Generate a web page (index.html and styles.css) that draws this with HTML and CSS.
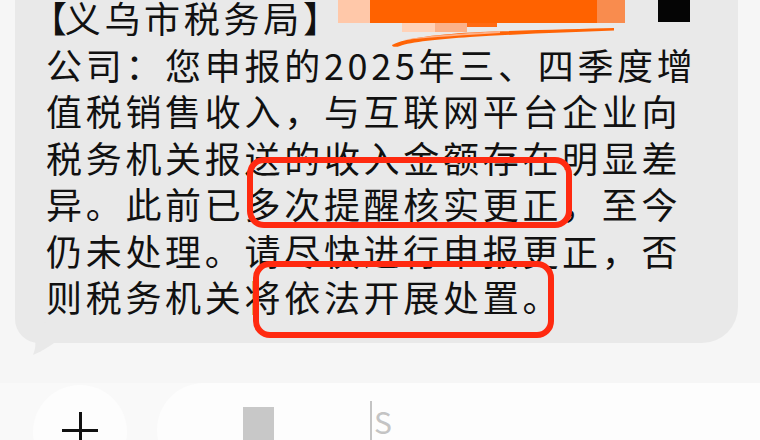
FILE: index.html
```html
<!DOCTYPE html>
<html lang="zh-CN">
<head>
<meta charset="utf-8">
<title>短信</title>
<link rel="stylesheet" href="styles.css">
</head>
<body>
<div class="page">
  <div class="thread">
    <div class="bubble">
      <div class="line"><span class="lb">【</span>义乌市税务局】</div>
      <div class="line">公司：您申报的2025年三、四季度增</div>
      <div class="line">值税销售收入，与互联网平台企业向</div>
      <div class="line">税务机关报送的收入金额存在明显差</div>
      <div class="line">异。此前已多次提醒核实更正，至今</div>
      <div class="line">仍未处理。请尽快进行申报更正，否</div>
      <div class="line">则税务机关将依法开展处置。</div>
      <svg class="tail" width="60" height="50" viewBox="0 0 60 50">
        <path d="M13 17 C20 25 23 34 18 46 C28 42 36 36 45 30 L45 10 Z" fill="#e9e9e9"/>
      </svg>
    </div>
  </div>
  <div class="toolbar">
    <div class="plus-btn"><span class="plus"></span></div>
    <div class="input-pill">
      <span class="ghost-square"></span>
      <span class="ghost-glyph">S</span>
    </div>
  </div>

  <div class="redact r-peach"></div>
  <div class="redact r-orange"></div>
  <div class="redact r-lightorange"></div>
  <div class="redact r-peach2"></div>
  <div class="redact r-mid"></div>
  <div class="redact r-orange2"></div>
  <div class="redact r-black"></div>
  <svg class="swoosh" width="760" height="60" viewBox="0 0 760 60">
    <path d="M392 45 C405 38 440 34 480 32 C530 30 580 29 614 28 L614 30.5 C570 32 520 34 470 37 C440 39 410 42 400 46 C396 47.5 392 47 392 45 Z" fill="#ff6406"/>
    <path d="M404 40 C430 35 470 33 500 31 L500 33 C470 35 430 37 404 40 Z" fill="#ffb088"/>
  </svg>

  <div class="mark mark-1"></div>
  <div class="mark mark-2"></div>
</div>
</body>
</html>
```

FILE: styles.css
```css
html, body {
  margin: 0;
  padding: 0;
}
body {
  width: 760px;
  height: 440px;
  overflow: hidden;
  background: #f6f6f6;
  font-family: "Noto Sans CJK SC", "Noto Sans", sans-serif;
  color: #111;
}
.page {
  position: relative;
  width: 760px;
  height: 440px;
  overflow: hidden;
}
.thread {
  padding: 0 22px 0 15px;
}
.bubble {
  position: relative;
  margin-top: -26px;
  padding: 20px 0 23.5px 31px;
  background: #e9e9e9;
  border-radius: 0 0 36px 24px;
}
.line {
  font-size: 36px;
  line-height: 46.5px;
  letter-spacing: 3.7px;
  white-space: nowrap;
}
.lb {
  font-feature-settings: "halt";
  margin-left: 3px;
  margin-right: -6px;
}
.tail {
  position: absolute;
  left: 0;
  bottom: -16px;
}
.toolbar {
  display: flex;
  align-items: flex-start;
  gap: 30px;
  margin-top: 40px;
  padding-left: 33px;
  background: #f9f9f9;
  height: 60px;
}
.plus-btn {
  position: relative;
  width: 94px;
  height: 94px;
  margin-top: 2px;
  border-radius: 50%;
  background: #fdfdfd;
  flex: none;
}
.plus {
  position: absolute;
  left: 29px;
  top: 27px;
  width: 36px;
  height: 36px;
}
.plus::before,
.plus::after {
  content: "";
  position: absolute;
  background: #111;
}
.plus::before {
  left: 0;
  top: 16.5px;
  width: 36px;
  height: 3px;
}
.plus::after {
  left: 16.5px;
  top: 0;
  width: 3px;
  height: 36px;
}
.input-pill {
  position: relative;
  flex: 1;
  height: 94px;
  margin-right: -60px;
  border-radius: 47px;
  background: #fdfdfd;
}
.ghost-square {
  position: absolute;
  left: 86px;
  top: 24px;
  width: 31px;
  height: 40px;
  background: #c8c8c8;
}
.ghost-glyph {
  position: absolute;
  left: 213px;
  top: 18px;
  padding-left: 2px;
  border-left: 2px solid #c4c4c4;
  font-size: 30px;
  line-height: 40px;
  color: #c4c4c4;
}
.redact {
  position: absolute;
}
.r-peach {
  left: 338px;
  top: 0;
  width: 32px;
  height: 23px;
  background: #ffc8a9;
}
.r-orange {
  left: 370px;
  top: 0;
  width: 227px;
  height: 23px;
  background: #ff6200;
}
.r-lightorange {
  left: 597px;
  top: 0;
  width: 28px;
  height: 23px;
  background: #f98c4e;
}
.r-peach2 {
  left: 402px;
  top: 23px;
  width: 33px;
  height: 9px;
  background: #ffd2b8;
}
.r-mid {
  left: 435px;
  top: 23px;
  width: 32px;
  height: 9px;
  background: #fbb28a;
}
.r-orange2 {
  left: 467px;
  top: 23px;
  width: 30px;
  height: 4px;
  background: #ff6a12;
}
.r-black {
  left: 658px;
  top: 0;
  width: 32px;
  height: 22px;
  background: #050505;
}
.swoosh {
  position: absolute;
  left: 0;
  top: 0;
}
.mark {
  position: absolute;
  border: 6px solid #ff2a10;
  border-radius: 17px;
  box-sizing: border-box;
}
.mark-1 {
  left: 247px;
  top: 157px;
  width: 325px;
  height: 71px;
}
.mark-2 {
  left: 253px;
  top: 261px;
  width: 301px;
  height: 77px;
}
```
